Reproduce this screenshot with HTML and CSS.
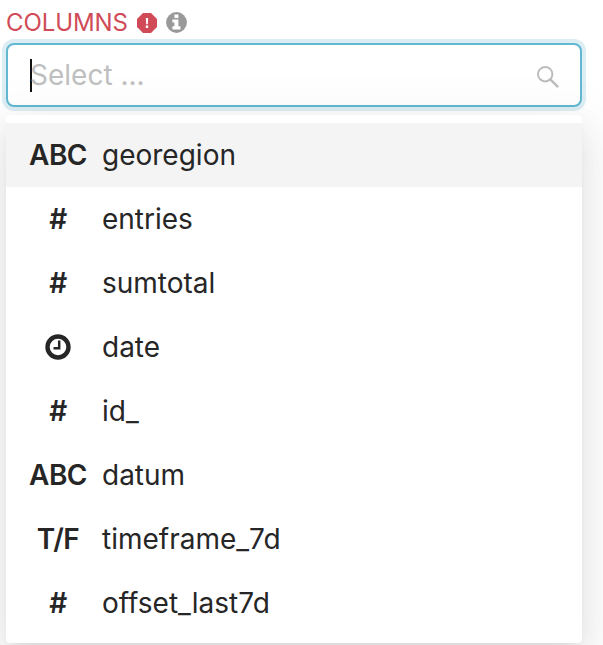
FILE: index.html
```html
<!DOCTYPE html>
<html lang="en">
<head>
<meta charset="utf-8">
<title>Columns</title>
<link rel="stylesheet" href="styles.css">
</head>
<body>
<main class="control">
  <div class="header">
    <span class="label">COLUMNS</span>
    <svg class="icon-error" viewBox="0 0 20 20"><path fill="#d04b57" d="M6 0h8l6 6v8l-6 6H6l-6-6V6z"/><path fill="#fff" d="M8.8 5h2.4l-.4 6.2H9.2zM8.8 12.6h2.4V15H8.8z"/></svg>
    <svg class="icon-info" viewBox="0 0 21 21"><circle cx="10.5" cy="10.5" r="10.4" fill="#999"/><path fill="#fff" d="M8.4 2.6h4V6h-4zM6.4 7.5h6v6.8h2v3.1h-8v-3.1h2v-3.7h-2z"/></svg>
  </div>
  <div class="select">
    <span class="caret"></span>
    <span class="placeholder">Select ...</span>
    <svg class="icon-search" viewBox="0 0 22 22" fill="none" stroke="#bcbcbc"><circle cx="8.2" cy="8.2" r="7.2" stroke-width="2"/><path stroke-width="2.4" d="M13.3 13.3l7.8 7.8"/></svg>
  </div>
  <ul class="dropdown">
    <li class="option active"><span class="type">ABC</span><span>georegion</span></li>
    <li class="option"><span class="type">#</span><span>entries</span></li>
    <li class="option"><span class="type">#</span><span>sumtotal</span></li>
    <li class="option"><span class="type"><svg class="icon-clock" viewBox="0 0 26 26" fill="none" stroke="#262626"><circle cx="13" cy="13" r="10.5" stroke-width="4.4"/><path stroke-width="2.5" d="M14.2 6.5v7.7H8.5"/></svg></span><span>date</span></li>
    <li class="option"><span class="type">#</span><span>id_</span></li>
    <li class="option"><span class="type">ABC</span><span>datum</span></li>
    <li class="option"><span class="type">T/F</span><span>timeframe_7d</span></li>
    <li class="option"><span class="type">#</span><span>offset_last7d</span></li>
  </ul>
</main>
</body>
</html>
```
FILE: styles.css
```css
* { box-sizing: border-box; }
html { height: 100%; overflow: hidden; }
body {
  margin: 0;
  height: 100%;
  overflow: hidden;
  background: #fff;
  color: #262626;
  font: 28px/44px Inter, sans-serif;
}
.control { width: 576px; margin-left: 6px; }
.header { display: flex; align-items: center; height: 43px; padding-top: 2px; }
.label {
  width: 131px;
  color: #d04b57;
  font-size: 24px;
  letter-spacing: -.1px;
}
.icon-error { width: 20px; height: 20px; }
.icon-info { width: 21px; height: 21px; margin-left: 9px; }
.select {
  display: flex;
  align-items: center;
  height: 64px;
  padding: 0 21px 0 22px;
  border: 2px solid #62b8d1;
  border-radius: 8px;
  background: #fff;
  box-shadow: 0 0 0 4px #dcedf3;
}
.caret { width: 2px; height: 33px; margin-right: -2px; background: #111; }
.placeholder { flex: 1; color: #bfbfbf; }
.icon-search { width: 22px; height: 22px; margin-top: 4px; }
.dropdown {
  position: relative;
  list-style: none;
  margin: 8px 0 0;
  padding: 8px 0;
  border-radius: 4px;
  background: #fff;
  box-shadow: 0 6px 12px -8px rgba(0, 0, 0, .12), 0 12px 32px rgba(0, 0, 0, .08), 0 18px 56px 16px rgba(0, 0, 0, .05);
}
.option { display: flex; align-items: center; height: 64px; padding: 0 24px; }
.active { background: #f4f4f4; }
.type {
  display: flex;
  flex: none;
  justify-content: center;
  align-items: center;
  width: 56px;
  margin-right: 16px;
  font-weight: 600;
  letter-spacing: -.5px;
}
.icon-clock { width: 26px; height: 26px; }
```
